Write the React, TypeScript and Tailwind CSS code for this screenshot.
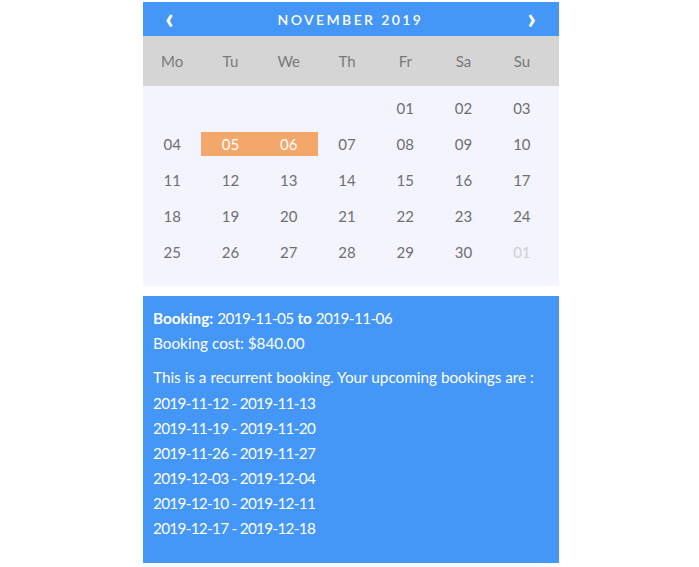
import React from 'react';

const days = ['Mo', 'Tu', 'We', 'Th', 'Fr', 'Sa', 'Su'];

interface Cell {
  label: string;
  muted?: boolean;
  selected?: boolean;
}

const cells: (Cell | null)[] = [
  null, null, null, null,
  { label: '01' }, { label: '02' }, { label: '03' },
  { label: '04' }, { label: '05', selected: true }, { label: '06', selected: true },
  { label: '07' }, { label: '08' }, { label: '09' }, { label: '10' },
  ...Array.from({ length: 20 }, (_, i) => ({ label: String(11 + i) })),
  { label: '01', muted: true },
];

const upcoming = [
  '2019-11-12 - 2019-11-13',
  '2019-11-19 - 2019-11-20',
  '2019-11-26 - 2019-11-27',
  '2019-12-03 - 2019-12-04',
  '2019-12-10 - 2019-12-11',
  '2019-12-17 - 2019-12-18',
];

export default function App() {
  return (
    <div
      className="min-h-[567px] bg-white pl-[143px] pt-[2px]"
      style={{ fontFamily: 'Lato, "Open Sans", sans-serif' }}
    >
      <div className="w-[416px] flex flex-col">
        {/* Month header */}
        <div className="h-[34px] bg-[#4496f7] flex items-center justify-between pl-[22px] pr-[23px] text-white">
          <span className="text-[30px] font-black leading-none -mt-[4px]">‹</span>
          <span className="text-[14px] font-semibold tracking-[2.4px]">NOVEMBER 2019</span>
          <span className="text-[30px] font-black leading-none -mt-[4px]">›</span>
        </div>

        {/* Weekdays */}
        <div className="h-[50px] bg-[#d5d5d5]">
          <div className="w-[408px] h-full grid grid-cols-7 items-center">
            {days.map((d) => (
              <div key={d} className="text-center text-[15px] text-[#7a7a7a]">
                {d}
              </div>
            ))}
          </div>
        </div>

        {/* Dates */}
        <div className="bg-[#f3f4fd] pt-[10px] pb-[22px]">
          <div className="w-[408px] grid grid-cols-7 gap-y-3">
            {cells.map((c, i) =>
              c ? (
                <div
                  key={i}
                  className={`h-6 flex items-center justify-center text-[15px] ${
                    c.selected
                      ? 'bg-[#f3a76b] text-white'
                      : c.muted
                      ? 'text-[#cfcfcf]'
                      : 'text-[#6f6f6f]'
                  }`}
                >
                  {c.label}
                </div>
              ) : (
                <div key={i} className="h-6" />
              )
            )}
          </div>
        </div>

        {/* Booking summary */}
        <div className="mt-[10px] bg-[#4496f7] text-white text-[15.3px] leading-[25px] px-[10px] pt-[10px] pb-[22px]">
          <div>
            <span className="font-bold">Booking:</span>{' '}
            <span className="tracking-[-0.6px]">2019-11-05</span> <span className="font-bold">to</span>{' '}
            <span className="tracking-[-0.6px]">2019-11-06</span>
          </div>
          <div>Booking cost: $840.00</div>
          <div className="mt-[9px]">This is a recurrent booking. Your upcoming bookings are :</div>
          <div className="mt-px">
            {upcoming.map((u) => (
              <div key={u} className="tracking-[-0.7px]">
                {u}
              </div>
            ))}
          </div>
        </div>
      </div>
    </div>
  );
}
